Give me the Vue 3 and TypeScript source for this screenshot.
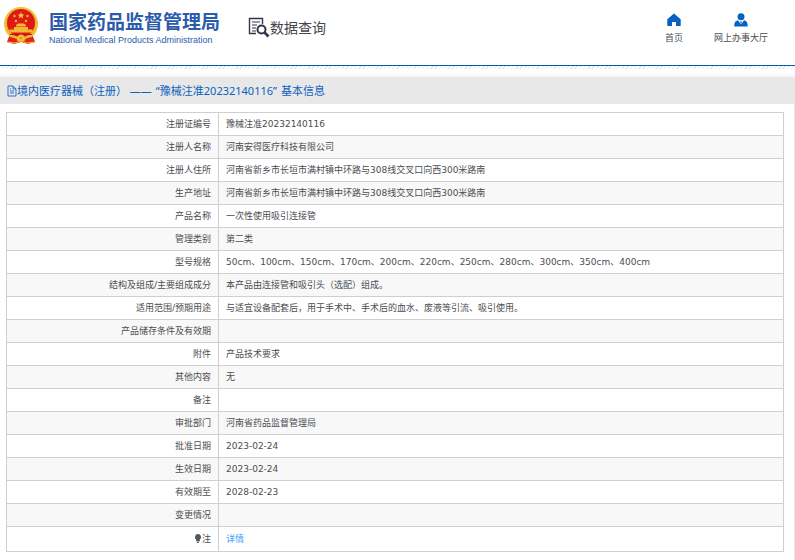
<script setup lang="ts">
interface Row {
  label: string
  value: string
  link?: boolean
}

const address = '河南省新乡市长垣市满村镇中环路与308线交叉口向西300米路南'

const rows: Row[] = [
  { label: '注册证编号', value: '豫械注准20232140116' },
  { label: '注册人名称', value: '河南安得医疗科技有限公司' },
  { label: '注册人住所', value: address },
  { label: '生产地址', value: address },
  { label: '产品名称', value: '一次性使用吸引连接管' },
  { label: '管理类别', value: '第二类' },
  { label: '型号规格', value: '50cm、100cm、150cm、170cm、200cm、220cm、250cm、280cm、300cm、350cm、400cm' },
  { label: '结构及组成/主要组成成分', value: '本产品由连接管和吸引头（选配）组成。' },
  { label: '适用范围/预期用途', value: '与适宜设备配套后，用于手术中、手术后的血水、废液等引流、吸引使用。' },
  { label: '产品储存条件及有效期', value: '' },
  { label: '附件', value: '产品技术要求' },
  { label: '其他内容', value: '无' },
  { label: '备注', value: '' },
  { label: '审批部门', value: '河南省药品监督管理局' },
  { label: '批准日期', value: '2023-02-24' },
  { label: '生效日期', value: '2023-02-24' },
  { label: '有效期至', value: '2028-02-23' },
  { label: '变更情况', value: '' },
  { label: '注', value: '详情', link: true },
]
</script>

<template>
  <div class="page">
    <header class="header">
      <a class="brand" href="#">
        <svg class="emblem" viewBox="0 0 36 38" aria-hidden="true">
          <path d="M7 27 L4 35 L11 37 L18 35 L25 37 L32 35 L29 27Z" fill="#df2317" />
          <circle cx="18" cy="17" r="17" fill="#edb72c" />
          <circle cx="18" cy="17" r="16" fill="none" stroke="#f6d24a" stroke-width="1" stroke-dasharray="2 1" />
          <circle cx="18" cy="16" r="14" fill="#df1a16" />
          <path d="M18 5l1 2.400h2.600l-2.100 1.600.8 2.500-2.300-1.500-2.300 1.500.8-2.500-2.100-1.600H17z" fill="#f8c93a" />
          <g fill="#f4b734">
            <circle cx="11.500" cy="9" r="1.200" />
            <circle cx="24.500" cy="9" r="1.200" />
            <circle cx="13" cy="14" r="1.200" />
            <circle cx="23" cy="14" r="1.200" />
            <path d="M13 18l2-1.500h6l2 1.500v1.500h-10zM11 20h14v2.500h4.500v3h-23v-3H11z" />
          </g>
          <path d="M7 27h22v1H7z" fill="#b91410" />
          <circle cx="18" cy="31" r="3.500" fill="#f2c236" />
          <circle cx="18" cy="31" r="1.500" fill="#e0a024" />
          <path d="M8 30l6 2-1 4-6-1zM28 30l-6 2 1 4 6-1z" fill="#e1251a" />
          <path d="M5 35l7 1 6-2 6 2 7-1" fill="none" stroke="#eebd32" />
        </svg>
        <span class="brand-text">
          <span class="brand-cn">国家药品监督管理局</span>
          <span class="brand-en">National Medical Products Administration</span>
        </span>
      </a>
      <div class="query">
        <svg class="query-icon" viewBox="0 0 22 22" fill="none" stroke="#34344a" aria-hidden="true">
          <path d="M14.500 8V2.500h-13v15H8" stroke-width="1.400" />
          <path d="M4 6h8M4 9h5M4 12h4M4 15h4" stroke-width="1.200" />
          <circle cx="13.500" cy="13.500" r="4" stroke-width="2" />
          <path d="M16.500 16.500l4 4" stroke-width="2.600" />
        </svg>
        <span>数据查询</span>
      </div>
      <nav class="nav">
        <a href="#">
          <svg viewBox="0 0 14 14" aria-hidden="true">
            <path d="M7 .5L.3 6.300V13H5V9h4v4h4.700V6.300z" fill="#0561c2" />
          </svg>
          <span>首页</span>
        </a>
        <a href="#">
          <svg viewBox="0 0 14 14" aria-hidden="true">
            <circle cx="7" cy="3.700" r="3.500" fill="#0561c2" />
            <path d="M.3 13.500c0-4 1-5.500 3.700-6.200L7 11.500l3-4.200c2.700.7 3.700 2.200 3.700 6.200z" fill="#0561c2" />
            <path d="M6 8.500h2L7 11.500z" fill="#0561c2" />
          </svg>
          <span>网上办事大厅</span>
        </a>
      </nav>
    </header>

    <div class="shade"></div>

    <main class="content">
      <h1 class="title">
        <svg viewBox="0 0 10 12" fill="none" stroke="#2c74c6" aria-hidden="true">
          <path d="M1 1h5l3 3v7H1zM6 1v3h3M3 6h4M3 8h4M3 4h1" />
        </svg>
        <span>境内医疗器械（注册） ——</span>
        <span class="quoted">“豫械注准20232140116”</span>
        <span class="suffix">基本信息</span>
      </h1>

      <div class="panel">
        <table class="info">
          <tbody>
            <tr v-for="row in rows" :key="row.label">
              <th scope="row">
                <svg v-if="row.link" class="bulb" viewBox="0 0 8 10" aria-hidden="true">
                  <path d="M4 0a3.500 3.500 0 0 1 2 6.300V8H2V6.300A3.500 3.500 0 0 1 4 0zM3 8.500h2V10H3z" fill="#55565a" />
                </svg>{{ row.label }}
              </th>
              <td>
                <a v-if="row.link" href="#" class="detail">{{ row.value }}</a>
                <template v-else>{{ row.value }}</template>
              </td>
            </tr>
          </tbody>
        </table>
      </div>
    </main>
  </div>
</template>

<style>
body {
  background: #fff;
}
</style>

<style scoped>
.page {
  font-family: "DejaVu Sans", "Noto Sans CJK SC", sans-serif;
  font-size: 9px;
  color: #4c4d51;
}

a {
  color: inherit;
  text-decoration: none;
}

.header {
  display: flex;
  align-items: flex-start;
  box-sizing: border-box;
  height: 66px;
  padding: 7px 27px 0 3px;
  border-bottom: 1px solid #0958b0;
}

.brand {
  display: flex;
  gap: 10px;
  color: #2b5cab;
}

.emblem {
  width: 36px;
  height: 38px;
}

.brand-text {
  display: flex;
  flex-direction: column;
  padding-top: 3px;
}

.brand-cn {
  font: bold 19px/22px "Noto Sans CJK SC", sans-serif;
}

.brand-en {
  font: 9px/16px "Liberation Sans", sans-serif;
  white-space: nowrap;
}

.query {
  display: flex;
  align-items: center;
  margin-left: 28px;
  padding-top: 9px;
  font: 14px/20px "Noto Sans CJK SC", sans-serif;
  color: #44454a;
}

.query-icon {
  width: 22px;
  height: 22px;
}

.nav {
  display: flex;
  gap: 31px;
  margin-left: auto;
  padding-top: 6px;
}

.nav a {
  display: flex;
  flex-direction: column;
  align-items: center;
  gap: 4px;
  line-height: 14px;
}

.nav svg {
  width: 14px;
  height: 14px;
}

.shade {
  height: 11px;
  background:
    repeating-linear-gradient(135deg, #e6e6e8 0 1px, transparent 1px 3px) top / 100% 3px no-repeat,
    linear-gradient(#fff 50%, #f6f6f6);
}

.content {
  border-right: 1px solid #e8e8e8;
}

.title {
  display: flex;
  align-items: center;
  margin: 0;
  padding: 0 7px;
  font: 11px/27px "Noto Sans", "Noto Sans CJK SC", sans-serif;
  color: #0b61c0;
  background: #e8e8e8;
}

.title svg {
  width: 10px;
  height: 12px;
}

.quoted,
.suffix {
  margin-left: 4px;
}

.panel {
  padding: 8px 10px 8px 6px;
}

.info {
  width: 100%;
  border-collapse: collapse;
  table-layout: fixed;
  border: 1px solid #cfcfcf;
}

.info th,
.info td {
  box-sizing: border-box;
  height: 23px;
  padding: 0 7px;
  border: 1px solid #cfcfcf;
  font-weight: normal;
  line-height: 14px;
}

.info tr:last-child > * {
  height: 25px;
}

.info th {
  width: 212px;
  text-align: right;
}

.info tr:nth-child(even) {
  background: #f8f8f8;
}

.bulb {
  width: 8px;
  height: 9px;
  vertical-align: -1px;
}

.detail {
  color: #409eff;
}
</style>
